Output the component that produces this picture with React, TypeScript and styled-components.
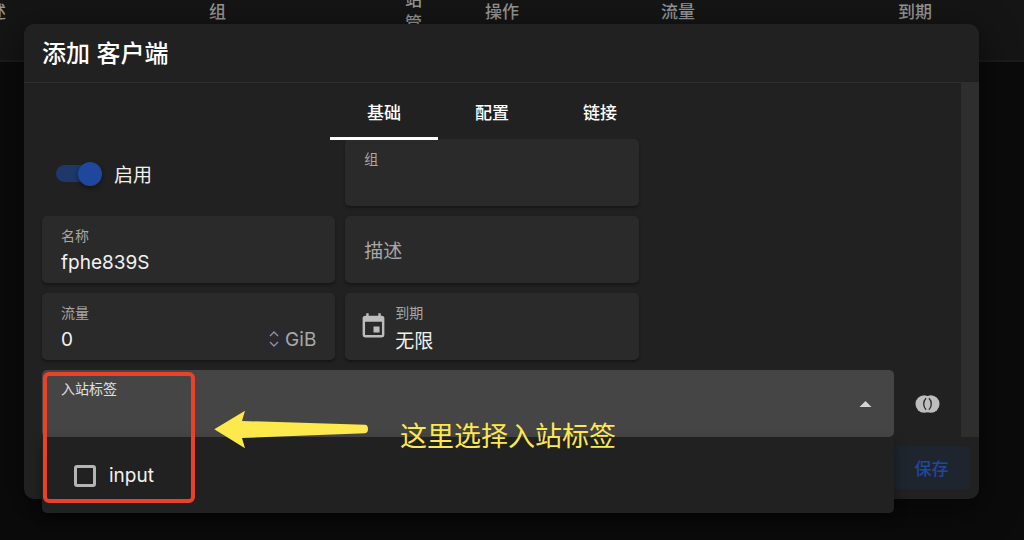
import React, { useState } from "react";
import styled, { createGlobalStyle, css } from "styled-components";

const GlobalStyle = createGlobalStyle`
  *, *::before, *::after { box-sizing: border-box; }
  body {
    margin: 0;
    background: #0b0b0b;
    color: #f0f0f0;
    font-family: Inter, "Noto Sans CJK SC", sans-serif;
    font-size: 19px;
  }
  button, input { font: inherit; color: inherit; }
`;

const Page = styled.main`
  position: relative;
  min-height: 100vh;
  overflow: hidden;
`;

const TableScroller = styled.div`
  overflow: hidden;
  background: #151515;
  border-bottom: 2px solid #1c1c1c;
`;

const ClientTable = styled.table`
  width: calc(100% + 28px);
  margin: -36px 0 0 -28px;
  table-layout: fixed;
  border-collapse: collapse;
`;

const HeadCell = styled.th<{ $width?: number }>`
  width: ${(p) => (p.$width ? `${p.$width}px` : "auto")};
  height: 96px;
  padding: 0;
  color: #969696;
  font-size: 17px;
  font-weight: 500;
  line-height: 23px;
  text-align: left;
  vertical-align: middle;
`;

const NarrowText = styled.span`
  display: block;
  width: 17px;
`;

const Overlay = styled.div`
  position: absolute;
  inset: 0;
  padding: 24px 45px 24px 24px;
`;

const Dialog = styled.section`
  background: #212121;
  border-radius: 10px;
  box-shadow: 0 10px 36px 4px rgba(0, 0, 0, 0.45);
`;

const DialogHeader = styled.header`
  padding: 12px 18px 11px;
  border-bottom: 1px solid #2e2e2e;
`;

const DialogTitle = styled.h1`
  margin: 0;
  color: #fff;
  font-size: 24px;
  font-weight: 500;
  line-height: 35px;
`;

const DialogBody = styled.div`
  display: flex;
`;

const BodyContent = styled.div`
  flex: 1;
  min-width: 0;
  padding: 0 19px 0 18px;
`;

const ScrollTrack = styled.div`
  width: 18px;
  background: #2e2e2e;
`;

const Tabs = styled.div`
  position: relative;
  z-index: 1;
  display: flex;
  justify-content: center;
  margin-bottom: -1px;
`;

const Tab = styled.button<{ $active: boolean }>`
  width: 108px;
  height: 57px;
  padding: 2px 0 0;
  border: 0;
  border-bottom: 3px solid ${(p) => (p.$active ? "#fff" : "transparent")};
  background: none;
  color: #fff;
  font-size: 17px;
  font-weight: 500;
`;

const FormGrid = styled.div`
  display: grid;
  grid-template-columns: repeat(3, 1fr);
  grid-auto-rows: 67px;
  gap: 10px;
`;

const SwitchRow = styled.label`
  grid-column: 1;
  display: flex;
  align-items: center;
  gap: 12px;
  padding: 2px 0 0 14px;
`;

const Switch = styled.input`
  appearance: none;
  position: relative;
  width: 46px;
  height: 24px;
  margin: 0;
  &::before {
    content: "";
    position: absolute;
    inset: 3px 4px 4px 0;
    border-radius: 9px;
    background: #1f3869;
  }
  &::after {
    content: "";
    position: absolute;
    top: 0;
    left: 0;
    width: 24px;
    height: 24px;
    border-radius: 50%;
    background: #1f479d;
    box-shadow: 0 2px 5px rgba(0, 0, 0, 0.45);
  }
  &:checked::after { left: 22px; }
`;

const fieldSurface = css`
  border-radius: 5px;
  background: #2a2a2a;
  box-shadow: 0 2px 3px rgba(0, 0, 0, 0.35);
`;

const Field = styled.label`
  ${fieldSurface}
  display: flex;
  align-items: stretch;
  padding: 0 19px;
`;

const DateField = styled(Field)`
  padding-left: 14px;
  gap: 7px;
  svg { align-self: center; }
`;

const FieldText = styled.span`
  flex: 1;
  min-width: 0;
  display: flex;
  flex-direction: column;
  gap: 2px;
  padding-top: 10px;
`;

const FieldLabel = styled.span`
  color: #a8a8a8;
  font-size: 14px;
  line-height: 20px;
`;

const FieldInput = styled.input`
  width: 100%;
  height: 28px;
  padding: 0;
  border: 0;
  outline: 0;
  background: none;
  color: #f2f2f2;
  &::placeholder { color: #a8a8a8; opacity: 1; }
`;

const PlainField = styled(Field)`
  align-items: center;
  padding-top: 4px;
`;

const Suffix = styled.span`
  display: flex;
  align-items: center;
  align-self: flex-end;
  height: 28px;
  margin-bottom: 7px;
  color: #a8a8a8;
`;

const Stepper = styled.button`
  display: flex;
  align-items: center;
  justify-content: center;
  width: 22px;
  height: 22px;
  padding: 0;
  border: 0;
  background: #2b2930;
  color: #918f99;
`;

const InboundRow = styled.div`
  grid-column: 1 / -1;
  display: flex;
  align-items: stretch;
`;

const SelectWrap = styled.div`
  position: relative;
  z-index: 1;
  flex: 1;
  min-width: 0;
  display: flex;
`;

const SelectButton = styled.button`
  flex: 1;
  display: flex;
  align-items: center;
  justify-content: space-between;
  padding: 0 22px 0 19px;
  border: 0;
  border-radius: 5px;
  background: #454545;
  color: #e0e0e0;
`;

const SelectLabel = styled.span`
  align-self: flex-start;
  padding-top: 9px;
  font-size: 14px;
  line-height: 20px;
`;

const Menu = styled.div`
  position: absolute;
  top: 100%;
  left: 0;
  right: 0;
  padding: 11px 0 10px;
  border-radius: 0 0 5px 5px;
  background: #212121;
  box-shadow: 0 6px 12px rgba(0, 0, 0, 0.4);
`;

const MenuOption = styled.label`
  display: flex;
  align-items: center;
  gap: 13px;
  height: 55px;
  padding-left: 32px;
  color: #f2f2f2;
`;

const CheckBox = styled.input`
  appearance: none;
  width: 22px;
  height: 22px;
  margin: 0;
  border: 3px solid #b4b4b4;
  border-radius: 3px;
  &:checked { background: #1f479d; }
`;

const ToggleAll = styled.button`
  display: flex;
  align-items: center;
  justify-content: center;
  width: 48px;
  padding: 0 0 0 19px;
  border: 0;
  background: none;
`;

const DialogFooter = styled.footer`
  display: flex;
  justify-content: flex-end;
  padding: 9px 9px 10px;
`;

const SaveButton = styled.button`
  width: 77px;
  height: 43px;
  padding: 0;
  border: 0;
  border-radius: 5px;
  background: #1f252e;
  color: #1f479f;
  font-size: 17px;
  font-weight: 500;
`;

const HighlightFrame = styled.div`
  position: absolute;
  top: 2px;
  left: 1px;
  width: 152px;
  height: 131px;
  border: 4px solid #ec4126;
  border-radius: 6px;
  pointer-events: none;
`;

const Callout = styled.div`
  position: absolute;
  top: 39px;
  left: 172px;
  display: flex;
  gap: 31px;
  color: #fde84d;
  font-size: 27px;
  line-height: 40px;
  white-space: nowrap;
  pointer-events: none;
`;

const CalloutText = styled.span`
  padding-top: 8px;
`;

const CalendarIcon = () => (
  <svg width="29" height="29" viewBox="0 0 24 24" fill="#bdbdbd" aria-hidden="true">
    <path d="M19,19H5V8H19M16,1V3H8V1H6V3H5C3.89,3 3,3.89 3,5V19A2,2 0 0,0 5,21H19A2,2 0 0,0 21,19V5C21,3.89 20.1,3 19,3H18V1M17,12H12V17H17V12Z" />
  </svg>
);

const StepperIcon = () => (
  <svg width="10" height="16" viewBox="0 0 10 16" fill="none" stroke="currentColor" strokeWidth="1.4" aria-hidden="true">
    <path d="M1 5L5 1L9 5M1 11L5 15L9 11" />
  </svg>
);

const CaretUpIcon = () => (
  <svg width="13" height="6" viewBox="0 0 12 6" fill="#d4d4d4" aria-hidden="true">
    <path d="M0 6L6 0L12 6Z" />
  </svg>
);

const OverlapIcon = () => (
  <svg width="25" height="18" viewBox="0 0 24 18" aria-hidden="true">
    <circle cx="8.7" cy="9" r="8.7" fill="#bdbdbd" />
    <circle cx="15.3" cy="9" r="8.7" fill="#bdbdbd" />
    <path d="M10.6 3.2C7.4 6.2 7.4 11.8 10.6 14.8M13.4 3.2C16.6 6.2 16.6 11.8 13.4 14.8" fill="none" stroke="#2a2a2a" strokeWidth="1.3" />
  </svg>
);

const ArrowDrawing = () => (
  <svg width="155" height="40" viewBox="0 0 155 40" fill="#fde84d" aria-hidden="true">
    <path d="M0.3 20.3L31 1.7L28 12L151 15.8Q154 16 154 20Q154 24 151 24.2L28 29L31 39.3Z" />
  </svg>
);

const TABS = ["基础", "配置", "链接"];

export default function App() {
  const [tab, setTab] = useState(0);
  return (
    <Page>
      <GlobalStyle />
      <TableScroller>
        <ClientTable>
          <thead>
            <tr>
              <HeadCell $width={237}>描述</HeadCell>
              <HeadCell $width={196}>组</HeadCell>
              <HeadCell $width={80}>
                <NarrowText>入站管理</NarrowText>
              </HeadCell>
              <HeadCell $width={176}>操作</HeadCell>
              <HeadCell $width={237}>流量</HeadCell>
              <HeadCell>到期</HeadCell>
            </tr>
          </thead>
        </ClientTable>
      </TableScroller>

      <Overlay>
        <Dialog role="dialog" aria-labelledby="dialog-title">
          <DialogHeader>
            <DialogTitle id="dialog-title">添加 客户端</DialogTitle>
          </DialogHeader>
          <DialogBody>
            <BodyContent>
              <Tabs role="tablist">
                {TABS.map((name, i) => (
                  <Tab key={name} type="button" role="tab" aria-selected={tab === i} $active={tab === i} onClick={() => setTab(i)}>
                    {name}
                  </Tab>
                ))}
              </Tabs>
              <FormGrid>
                <SwitchRow>
                  <Switch type="checkbox" role="switch" defaultChecked />
                  启用
                </SwitchRow>
                <Field>
                  <FieldText>
                    <FieldLabel>组</FieldLabel>
                    <FieldInput />
                  </FieldText>
                </Field>
                <span />
                <Field>
                  <FieldText>
                    <FieldLabel>名称</FieldLabel>
                    <FieldInput defaultValue="fphe839S" />
                  </FieldText>
                </Field>
                <PlainField>
                  <FieldInput placeholder="描述" aria-label="描述" />
                </PlainField>
                <span />
                <Field>
                  <FieldText>
                    <FieldLabel>流量</FieldLabel>
                    <FieldInput inputMode="numeric" defaultValue="0" />
                  </FieldText>
                  <Suffix>
                    <Stepper type="button" aria-label="调整流量">
                      <StepperIcon />
                    </Stepper>
                    GiB
                  </Suffix>
                </Field>
                <DateField>
                  <CalendarIcon />
                  <FieldText>
                    <FieldLabel>到期</FieldLabel>
                    <FieldInput readOnly defaultValue="无限" />
                  </FieldText>
                </DateField>
                <InboundRow>
                  <SelectWrap>
                    <SelectButton type="button" aria-haspopup="listbox" aria-expanded="true">
                      <SelectLabel>入站标签</SelectLabel>
                      <CaretUpIcon />
                    </SelectButton>
                    <Menu>
                      <MenuOption>
                        <CheckBox type="checkbox" />
                        input
                      </MenuOption>
                    </Menu>
                    <HighlightFrame />
                    <Callout>
                      <ArrowDrawing />
                      <CalloutText>这里选择入站标签</CalloutText>
                    </Callout>
                  </SelectWrap>
                  <ToggleAll type="button" aria-label="全选">
                    <OverlapIcon />
                  </ToggleAll>
                </InboundRow>
              </FormGrid>
            </BodyContent>
            <ScrollTrack />
          </DialogBody>
          <DialogFooter>
            <SaveButton type="button">保存</SaveButton>
          </DialogFooter>
        </Dialog>
      </Overlay>
    </Page>
  );
}
